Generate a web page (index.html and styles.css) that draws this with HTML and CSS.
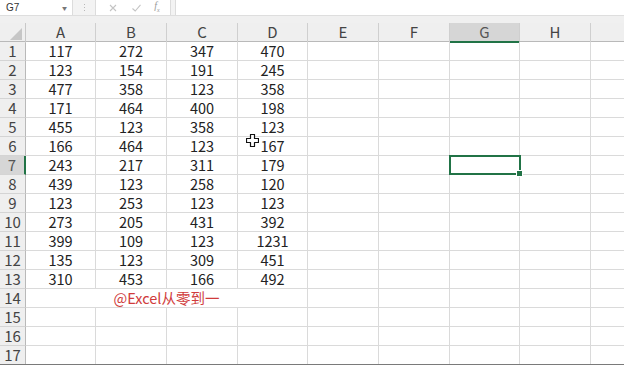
FILE: index.html
```html
<!DOCTYPE html>
<html lang="zh">
<head>
<meta charset="utf-8">
<link rel="stylesheet" href="styles.css">
</head>
<body>
<div class="app">
  <div class="toolbar">
    <div class="namebox"><span class="ref">G7</span><span class="drop">▼</span></div>
    <div class="grip"><i></i><i></i><i></i></div>
    <div class="fxbox">
      <svg width="10" height="10" viewBox="0 0 10 10"><path d="M2 2 L8 8 M8 2 L2 8" stroke="#c4c4c4" stroke-width="1.1" fill="none"/></svg>
      <svg width="11" height="10" viewBox="0 0 11 10"><path d="M1.5 5.5 L4.2 8 L9.5 1.8" stroke="#c4c4c4" stroke-width="1.1" fill="none"/></svg>
      <span class="fx"><i>f</i><sub>x</sub></span>
    </div>
    <div class="formula"></div>
  </div>
  <div class="band"></div>
  <div class="sheet head">
    <div class="corner"><span class="tri"></span></div>
    <div class="ch">A</div><div class="ch">B</div><div class="ch">C</div><div class="ch">D</div>
    <div class="ch">E</div><div class="ch">F</div><div class="ch sel">G</div><div class="ch">H</div><div class="ch last"></div>
  </div>
  <div class="sheet body">
    <div class="rh">1</div><div class="c">117</div><div class="c">272</div><div class="c">347</div><div class="c">470</div><div class="c"></div><div class="c"></div><div class="c"></div><div class="c"></div><div class="c last"></div>
    <div class="rh">2</div><div class="c">123</div><div class="c">154</div><div class="c">191</div><div class="c">245</div><div class="c"></div><div class="c"></div><div class="c"></div><div class="c"></div><div class="c last"></div>
    <div class="rh">3</div><div class="c">477</div><div class="c">358</div><div class="c">123</div><div class="c">358</div><div class="c"></div><div class="c"></div><div class="c"></div><div class="c"></div><div class="c last"></div>
    <div class="rh">4</div><div class="c">171</div><div class="c">464</div><div class="c">400</div><div class="c">198</div><div class="c"></div><div class="c"></div><div class="c"></div><div class="c"></div><div class="c last"></div>
    <div class="rh">5</div><div class="c">455</div><div class="c">123</div><div class="c">358</div><div class="c">123</div><div class="c"></div><div class="c"></div><div class="c"></div><div class="c"></div><div class="c last"></div>
    <div class="rh">6</div><div class="c">166</div><div class="c">464</div><div class="c">123</div><div class="c">167</div><div class="c"></div><div class="c"></div><div class="c"></div><div class="c"></div><div class="c last"></div>
    <div class="rh sel">7</div><div class="c">243</div><div class="c">217</div><div class="c">311</div><div class="c">179</div><div class="c"></div><div class="c"></div><div class="c"></div><div class="c"></div><div class="c last"></div>
    <div class="rh">8</div><div class="c">439</div><div class="c">123</div><div class="c">258</div><div class="c">120</div><div class="c"></div><div class="c"></div><div class="c"></div><div class="c"></div><div class="c last"></div>
    <div class="rh">9</div><div class="c">123</div><div class="c">253</div><div class="c">123</div><div class="c">123</div><div class="c"></div><div class="c"></div><div class="c"></div><div class="c"></div><div class="c last"></div>
    <div class="rh">10</div><div class="c">273</div><div class="c">205</div><div class="c">431</div><div class="c">392</div><div class="c"></div><div class="c"></div><div class="c"></div><div class="c"></div><div class="c last"></div>
    <div class="rh">11</div><div class="c">399</div><div class="c">109</div><div class="c">123</div><div class="c">1231</div><div class="c"></div><div class="c"></div><div class="c"></div><div class="c"></div><div class="c last"></div>
    <div class="rh">12</div><div class="c">135</div><div class="c">123</div><div class="c">309</div><div class="c">451</div><div class="c"></div><div class="c"></div><div class="c"></div><div class="c"></div><div class="c last"></div>
    <div class="rh">13</div><div class="c">310</div><div class="c">453</div><div class="c">166</div><div class="c">492</div><div class="c"></div><div class="c"></div><div class="c"></div><div class="c"></div><div class="c last"></div>
    <div class="rh">14</div><div class="c merged">@Excel从零到一</div><div class="c"></div><div class="c"></div><div class="c"></div><div class="c"></div><div class="c last"></div>
    <div class="rh">15</div><div class="c"></div><div class="c"></div><div class="c"></div><div class="c"></div><div class="c"></div><div class="c"></div><div class="c"></div><div class="c"></div><div class="c last"></div>
    <div class="rh">16</div><div class="c"></div><div class="c"></div><div class="c"></div><div class="c"></div><div class="c"></div><div class="c"></div><div class="c"></div><div class="c"></div><div class="c last"></div>
    <div class="rh">17</div><div class="c"></div><div class="c"></div><div class="c"></div><div class="c"></div><div class="c"></div><div class="c"></div><div class="c"></div><div class="c"></div><div class="c last"></div>
  </div>
  <div class="selbox"></div>
  <svg class="cursor" width="13" height="13" viewBox="0 0 13 13"><path d="M4.5 0.5 H8.5 V4.5 H12.5 V8.5 H8.5 V12.5 H4.5 V8.5 H0.5 V4.5 H4.5 Z" fill="#fff" stroke="#111" stroke-width="1.2" stroke-linejoin="round"/></svg>
</div>
</body>
</html>
```
FILE: styles.css
```css
html,body{margin:0;padding:0;background:#fff;}
body{width:624px;height:365px;overflow:hidden;font-family:"Noto Sans CJK SC","Noto Sans",sans-serif;}
.app{position:relative;width:624px;height:365px;overflow:hidden;background:#fff;}
.toolbar{height:16px;display:flex;background:#f3f3f3;border-bottom:1px solid #dedede;box-sizing:border-box;}
.namebox{width:73px;background:#fff;border-right:1px solid #dcdcdc;display:flex;align-items:center;justify-content:space-between;padding:0 5px 0 6px;box-sizing:border-box;}
.ref{font-size:10px;color:#333;font-family:"Liberation Sans",sans-serif;}
.drop{font-size:5px;color:#777;}
.grip{width:22px;display:flex;flex-direction:column;align-items:center;justify-content:center;gap:2px;}
.grip i{width:1px;height:1px;background:#b8b8b8;display:block;}
.fxbox{width:76px;background:#fff;border-left:1px solid #dcdcdc;border-right:1px solid #dcdcdc;display:flex;align-items:center;justify-content:space-around;padding:0 4px 0 6px;box-sizing:border-box;}
.fx{font-family:"Liberation Serif",serif;color:#999;font-size:10px;line-height:10px;}
.fx sub{font-size:6px;font-style:italic;}
.formula{flex:1;background:#fff;margin-left:4px;border-left:1px solid #dcdcdc;}
.band{height:7px;background:#f0f0f0;}
.sheet{display:grid;grid-template-columns:26px 70px 71px 71px 70px 71px 71px 70px 71px 33px;}
.head{height:19px;background:#efefef;border-bottom:1px solid #b9b9b9;box-sizing:border-box;}
.body{grid-auto-rows:19px;}
.corner{position:relative;border-right:1px solid #c8c8c8;box-sizing:border-box;}
.tri{position:absolute;right:3px;bottom:3px;width:0;height:0;border-left:12px solid transparent;border-bottom:12px solid #c6c6c6;}
.ch{border-right:1px solid #cfcfcf;box-sizing:border-box;text-align:center;font-size:15px;line-height:18px;color:#444;}
.ch.sel{background:#d6d6d6;color:#555;border-bottom:2px solid #217346;}
.ch.last{border-right:none;}
.rh{background:#efefef;border-right:1px solid #b9b9b9;border-bottom:1px solid #d4d4d4;box-sizing:border-box;font-size:15px;line-height:18px;color:#444;text-align:center;}
.rh.sel{background:#d6d6d6;color:#555;border-right:2px solid #217346;}
.c{border-right:1px solid #dadada;border-bottom:1px solid #dadada;box-sizing:border-box;font-size:14.5px;line-height:18px;color:#222;text-align:center;}
.c.last{border-right:none;}
.merged{grid-column:span 4;color:#d03b3b;}
.selbox{position:absolute;left:449px;top:155px;width:72px;height:20px;border:2px solid #217346;box-sizing:border-box;}
.selbox::after{content:"";position:absolute;right:-4px;bottom:-4px;width:5px;height:5px;background:#217346;border:1px solid #fff;}
.cursor{position:absolute;left:246px;top:134px;}
.app::after{content:"";position:absolute;left:0;right:0;bottom:0;height:1px;background:#7a7a7a;}
```
